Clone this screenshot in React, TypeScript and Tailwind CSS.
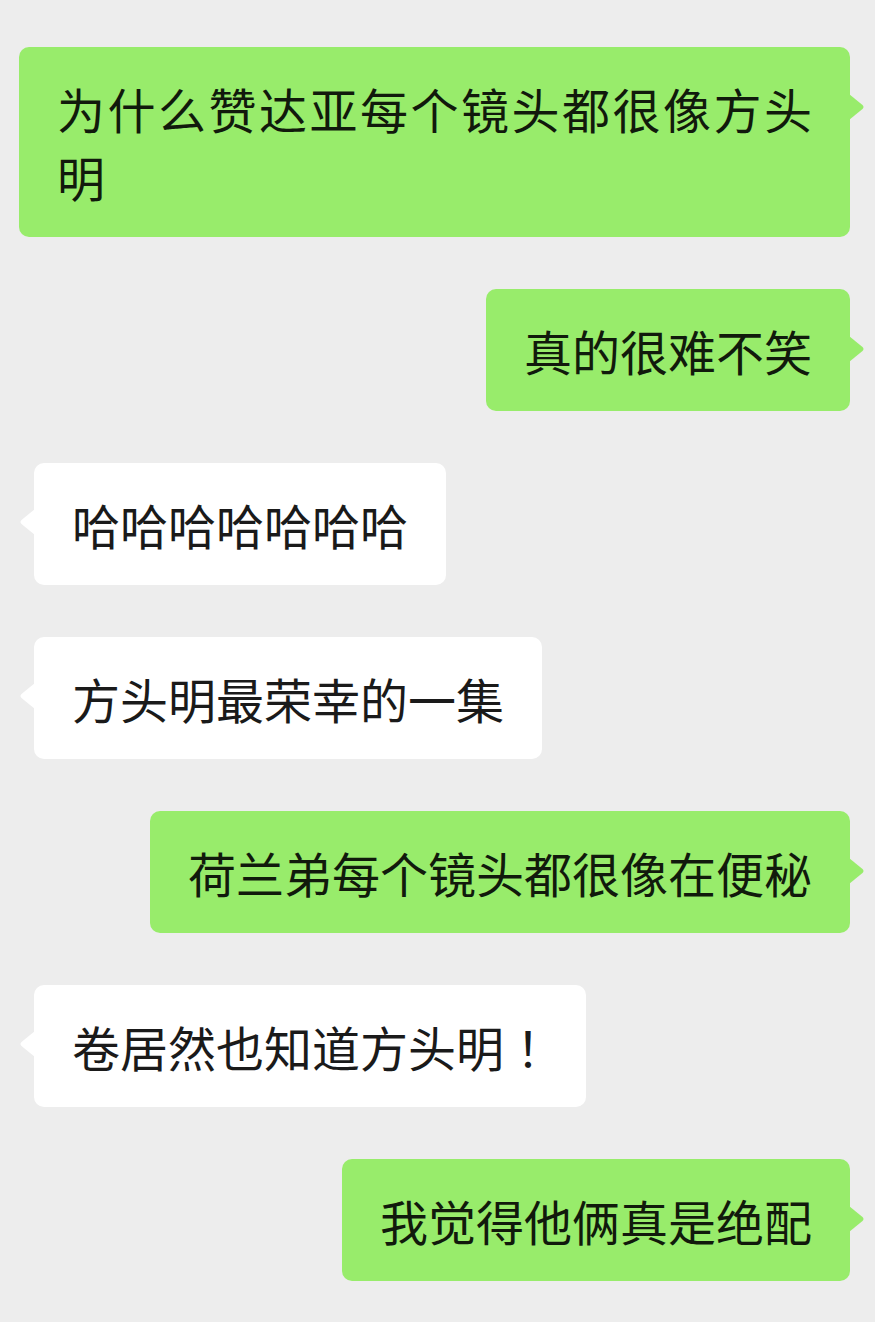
import React from 'react';

type Msg = { id: number; mine: boolean; text: string };

const messages: Msg[] = [
  { id: 1, mine: true, text: '为什么赞达亚每个镜头都很像方头明' },
  { id: 2, mine: true, text: '真的很难不笑' },
  { id: 3, mine: false, text: '哈哈哈哈哈哈哈' },
  { id: 4, mine: false, text: '方头明最荣幸的一集' },
  { id: 5, mine: true, text: '荷兰弟每个镜头都很像在便秘' },
  { id: 6, mine: false, text: '卷居然也知道方头明！' },
  { id: 7, mine: true, text: '我觉得他俩真是绝配' },
];

const Tail = ({ mine }: { mine: boolean }) => (
  <svg
    width="16"
    height="26"
    viewBox="0 0 16 26"
    className={mine ? 'absolute top-[47px] -right-[15px]' : 'absolute top-[46px] -left-[15px] -scale-x-100'}
  >
    <path d="M0 0 L13.5 11 Q15.5 13 13.5 15 L0 26 Z" fill={mine ? '#98ec6b' : '#ffffff'} />
  </svg>
);

// fullwidth punctuation drawn centred in its cell, as in the screenshot
const renderText = (text: string) =>
  text.split(/(！)/).map((part, i) =>
    part === '！' ? (
      <span key={i} className="inline-block w-[44px] text-center" style={{ fontFamily: '"Noto Sans CJK TC", sans-serif' }}>
        {part}
      </span>
    ) : (
      part
    )
  );

const Bubble = ({ msg }: { msg: Msg }) => (
  <div
    className={`relative rounded-[10px] px-[38px] py-[27px] text-[48px] leading-[68px] text-justify ${
      msg.mine ? 'bg-[#98ec6b] text-[#111a0c]' : 'bg-white text-[#1a1a1a]'
    }`}
  >
    {renderText(msg.text)}
    <Tail mine={msg.mine} />
  </div>
);

export default function App() {
  return (
    <div
      className="w-[875px] h-[1322px] overflow-hidden bg-[#ededed] pt-[47px] flex flex-col gap-[52px]"
      style={{ fontFamily: '"Noto Sans CJK SC", "Noto Sans", sans-serif' }}
    >
      {messages.map((msg) =>
        msg.mine ? (
          <div key={msg.id} className="flex justify-end pl-[19px] pr-[25px]">
            <Bubble msg={msg} />
          </div>
        ) : (
          <div key={msg.id} className="flex justify-start pl-[34px] pr-[25px]">
            <Bubble msg={msg} />
          </div>
        )
      )}
    </div>
  );
}
